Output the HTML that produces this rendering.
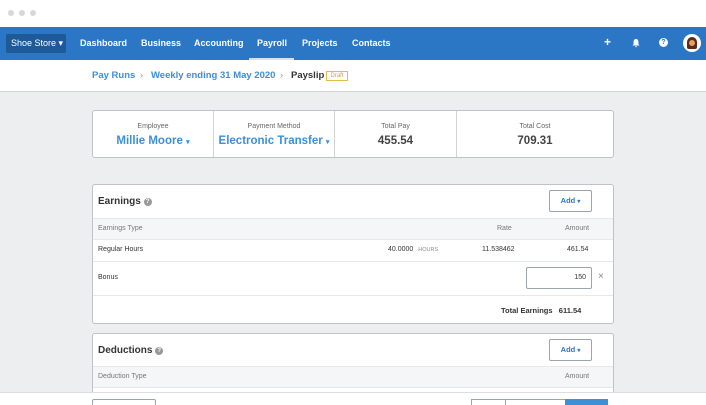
<!DOCTYPE html>
<html style="width:706px;height:405px;overflow:hidden"><head><style>
*{box-sizing:border-box;margin:0;padding:0}
body{width:706px;height:405px;overflow:hidden;background:#eceef0;font-family:"Liberation Sans",sans-serif;position:relative;color:#333}
.abs{position:absolute}
.top{left:0;top:0;width:706px;height:27px;background:#fff}
.dot{width:6px;height:6px;border-radius:3px;background:#d8d8d8;top:10px}
.nav{left:0;top:27px;width:706px;height:33px;background:#2b77c5}
.nav span{position:absolute;top:11px;color:#fff;font-size:9px;font-weight:bold}
.bc{left:0;top:60px;width:706px;height:32px;background:#fff;border-bottom:1px solid #d0d2d4}
.bc span{position:absolute;top:10px;font-size:9.5px;font-weight:bold;color:#3d8fd6;white-space:nowrap}
.card{background:#fff;border:1px solid #bfc3c7;border-radius:3px}
.lbl{font-size:7px;color:#666;text-align:center;position:absolute;width:100%}
.th{background:#f5f6f7;border-top:1px solid #e6e8ea;border-bottom:1px solid #e6e8ea}
.s{font-size:7px;position:absolute}
.btn{background:#fff;border:1px solid #9aa4ad;border-radius:2px;position:absolute;color:#2b77c5;font-size:7.5px;font-weight:bold;text-align:center}
</style></head><body>
<div class="abs top"></div>
<div class="abs dot" style="left:8px"></div><div class="abs dot" style="left:19px"></div><div class="abs dot" style="left:30px"></div>
<div class="abs nav">
 <div class="abs" style="left:6px;top:7px;width:60px;height:19px;background:#1f5a98;border-radius:2px;color:#fff;font-size:9px;line-height:19px;padding-left:5px">Shoe Store ▾</div>
 <span style="left:80px">Dashboard</span><span style="left:141px">Business</span><span style="left:194px">Accounting</span><span style="left:257px">Payroll</span><span style="left:302px">Projects</span><span style="left:352px">Contacts</span>
 <div class="abs" style="left:249px;top:31px;width:45px;height:2px;background:#cfe3f7"></div>
 <span style="left:604px;top:8px;font-size:12px">+</span>
 <svg class="abs" style="left:631px;top:11px" width="10" height="10" viewBox="0 0 10 10"><path d="M5 1C3.3 1 2.6 2.4 2.6 4V6L1.5 7.5H8.5L7.4 6V4C7.4 2.4 6.7 1 5 1Z M4 8.2H6A1 1 0 0 1 4 8.2Z" fill="#fff"/></svg>
 <div class="abs" style="left:659px;top:11px;width:9px;height:9px;border-radius:5px;background:#fff;color:#2b77c5;font-size:7px;font-weight:bold;text-align:center;line-height:9px">?</div>
 <div class="abs" style="left:683px;top:7px;width:18px;height:18px;border-radius:9px;background:#fff;overflow:hidden"><div class="abs" style="left:4px;top:3px;width:10px;height:12px;border-radius:5px 5px 2px 2px;background:#5a2a1a"></div><div class="abs" style="left:6px;top:6px;width:6px;height:6px;border-radius:3px;background:#e8a060"></div></div>
</div>
<div class="abs bc">
 <span style="left:92px">Pay Runs</span>
 <span style="left:140px;color:#999;font-weight:normal">›</span>
 <span style="left:151px">Weekly ending 31 May 2020</span>
 <span style="left:280px;color:#999;font-weight:normal">›</span>
 <span style="left:291px;color:#333">Payslip</span>
 <div class="abs" style="left:326px;top:11px;width:22px;height:10px;border:1px solid #e4b94d;color:#d9a02e;font-size:6px;text-align:center;line-height:8px">Draft</div>
</div>
<div class="abs card" style="left:92px;top:110px;width:522px;height:48px">
 <div class="abs" style="left:0;top:0;width:121px;height:46px;border-right:1px solid #d0d3d6"><div class="lbl" style="top:12px">Employee</div><div class="abs" style="top:24px;width:100%;text-align:center;font-size:11.5px;font-weight:bold;color:#3d8fd6">Millie Moore <span style="font-size:7px">▾</span></div></div>
 <div class="abs" style="left:121px;top:0;width:121px;height:46px;border-right:1px solid #d0d3d6"><div class="lbl" style="top:12px">Payment Method</div><div class="abs" style="top:24px;width:100%;text-align:center;font-size:11.5px;font-weight:bold;color:#3d8fd6;white-space:nowrap">Electronic Transfer <span style="font-size:7px">▾</span></div></div>
 <div class="abs" style="left:242px;top:0;width:122px;height:46px;border-right:1px solid #d0d3d6"><div class="lbl" style="top:12px">Total Pay</div><div class="abs" style="top:24px;width:100%;text-align:center;font-size:11.5px;font-weight:bold;color:#444">455.54</div></div>
 <div class="abs" style="left:364px;top:0;width:156px;height:46px"><div class="lbl" style="top:12px">Total Cost</div><div class="abs" style="top:24px;width:100%;text-align:center;font-size:11.5px;font-weight:bold;color:#444">709.31</div></div>
</div>
<div class="abs card" style="left:92px;top:184px;width:522px;height:140px">
 <div class="abs" style="left:5px;top:11px;font-size:10px;font-weight:bold">Earnings <span style="display:inline-block;width:8px;height:8px;border-radius:4px;background:#999;color:#fff;font-size:6px;text-align:center;line-height:8px;vertical-align:1px">?</span></div>
 <div class="btn" style="left:456px;top:5px;width:43px;height:22px;line-height:20px">Add <span style="font-size:6px">▾</span></div>
 <div class="abs th" style="left:0;top:33px;width:520px;height:22px"></div>
 <div class="s" style="left:5px;top:40px;color:#777">Earnings Type</div>
 <div class="s" style="left:404px;top:40px;color:#777">Rate</div>
 <div class="s" style="left:472px;top:40px;color:#777">Amount</div>
 <div class="s" style="left:5px;top:61px">Regular Hours</div>
 <div class="s" style="left:295px;top:61px">40.0000 <span style="font-size:5.5px;color:#888;margin-left:3px">HOURS</span></div>
 <div class="s" style="left:389px;top:61px">11.538462</div>
 <div class="s" style="left:474px;top:61px">461.54</div>
 <div class="abs" style="left:0;top:76px;width:520px;border-top:1px solid #e6e8ea"></div>
 <div class="s" style="left:5px;top:89px">Bonus</div>
 <div class="abs" style="left:433px;top:82px;width:66px;height:22px;border:1px solid #9aa4ad;border-radius:2px;font-size:7px;text-align:right;padding-right:5px;line-height:20px">150</div>
 <div class="s" style="left:505px;top:86px;font-size:10px;color:#888">×</div>
 <div class="abs" style="left:0;top:110px;width:520px;border-top:1px solid #e6e8ea"></div>
 <div class="s" style="left:408px;top:121px;font-size:7.5px;font-weight:bold">Total Earnings&nbsp;&nbsp; 611.54</div>
</div>
<div class="abs card" style="left:92px;top:333px;width:522px;height:72px;border-bottom:none;border-radius:3px 3px 0 0">
 <div class="abs" style="left:5px;top:11px;font-size:10px;font-weight:bold">Deductions <span style="display:inline-block;width:8px;height:8px;border-radius:4px;background:#999;color:#fff;font-size:6px;text-align:center;line-height:8px;vertical-align:1px">?</span></div>
 <div class="btn" style="left:456px;top:5px;width:43px;height:22px;line-height:20px">Add <span style="font-size:6px">▾</span></div>
 <div class="abs th" style="left:0;top:32px;width:520px;height:22px"></div>
 <div class="s" style="left:5px;top:39px;color:#777">Deduction Type</div>
 <div class="s" style="left:472px;top:39px;color:#777">Amount</div>
</div>
<div class="abs" style="left:0;top:392px;width:706px;height:13px;background:#fff;border-top:1px solid #dcdfe2;overflow:hidden">
 <div class="abs" style="left:92px;top:6px;width:64px;height:12px;border:1px solid #9aa4ad;border-radius:2px;background:#fff"></div>
 <div class="abs" style="left:471px;top:6px;width:35px;height:12px;border:1px solid #9aa4ad;background:#fff"></div>
 <div class="abs" style="left:505px;top:6px;width:61px;height:12px;border:1px solid #9aa4ad;background:#fff"></div>
 <div class="abs" style="left:565px;top:6px;width:43px;height:12px;background:#3d8fd6"></div>
</div>
</body></html>
